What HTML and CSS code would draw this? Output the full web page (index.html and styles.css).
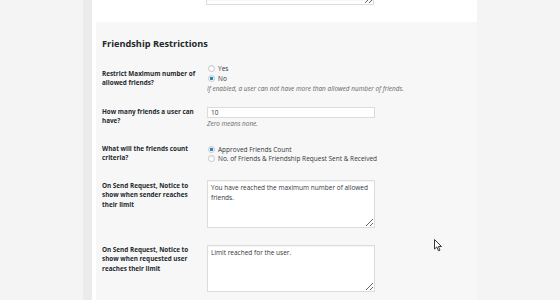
FILE: index.html
```html
<!DOCTYPE html>
<html>
<head>
<meta charset="utf-8">
<link rel="stylesheet" href="styles.css">
</head>
<body>
<div class="page">
  <div class="gutter"></div>
  <div class="strip"></div>
  <div class="main">
    <div class="top">
      <textarea class="area area-top" readonly></textarea>
    </div>
    <div class="section">
      <h2 class="title">Friendship Restrictions</h2>
      <div class="row row-1">
        <div class="label">Restrict Maximum number of allowed friends?</div>
        <div class="field">
          <label class="opt"><input type="radio" name="r1" class="radio"> Yes</label>
          <label class="opt"><input type="radio" name="r1" class="radio" checked> No</label>
          <p class="desc">If enabled, a user can not have more than allowed number of friends.</p>
        </div>
      </div>
      <div class="row row-2">
        <div class="label">How many friends a user can have?</div>
        <div class="field">
          <input type="text" class="text" value="10" readonly>
          <p class="desc desc-2">Zero means none.</p>
        </div>
      </div>
      <div class="row row-3">
        <div class="label">What will the friends count criteria?</div>
        <div class="field">
          <label class="opt opt-tight"><input type="radio" name="r2" class="radio" checked> Approved Friends Count</label>
          <label class="opt opt-tight"><input type="radio" name="r2" class="radio"> No. of Friends &amp; Friendship Request Sent &amp; Received</label>
        </div>
      </div>
      <div class="row row-4">
        <div class="label">On Send Request, Notice to show when sender reaches their limit</div>
        <div class="field">
          <textarea class="area area-4" readonly>You have reached the maximum number of allowed friends.</textarea>
        </div>
      </div>
      <div class="row row-5">
        <div class="label">On Send Request, Notice to show when requested user reaches their limit</div>
        <div class="field">
          <textarea class="area area-5" readonly>Limit reached for the user.</textarea>
        </div>
      </div>
    </div>
  </div>
</div>
<svg class="cursor" width="9" height="13" viewBox="0 0 9 13"><path d="M0.5 0.5 L0.5 10 L2.8 8 L4.5 11.8 L6 11.1 L4.4 7.5 L7.5 7.5 Z" fill="#fff" stroke="#222" stroke-width="0.9" stroke-linejoin="round"/></svg>
</body>
</html>
```

FILE: styles.css
```css
html, body {
  margin: 0;
  padding: 0;
  background: #f4f4f4;
  font-family: "Open Sans", "Noto Sans", sans-serif;
  color: #23282d;
}
.page {
  display: flex;
  height: 300px;
  overflow: hidden;
}
.gutter {
  width: 83px;
  flex: none;
}
.strip {
  width: 9px;
  flex: none;
  background: #ebebeb;
}
.main {
  width: 385px;
  flex: none;
  background: #fff;
  padding-left: 4px;
  box-sizing: border-box;
  display: flex;
  flex-direction: column;
}
.top {
  height: 22px;
  display: flex;
  flex-direction: column;
  justify-content: flex-end;
  overflow: hidden;
  padding-left: 110px;
}
.area {
  display: block;
  box-sizing: border-box;
  width: 168px;
  margin: 0;
  padding: 2px 3px;
  border: 1px solid #dcdcdc;
  border-radius: 0;
  background: #fff;
  color: #32373c;
  font-family: "Open Sans", "Noto Sans", sans-serif;
  font-size: 6.5px;
  line-height: 9.5px;
  box-shadow: inset 0 1px 1px rgba(0,0,0,0.04);
  outline: none;
}
.area-top {
  height: 40px;
  margin-bottom: 17px;
}
.section {
  flex: 1;
  background: #f7f7f7;
  padding-left: 6px;
}
.title {
  margin: 16px 0 10px;
  font-size: 9.2px;
  line-height: 12px;
  font-weight: 700;
}
.row {
  display: grid;
  grid-template-columns: 105px 1fr;
}
.label {
  padding-top: 9.5px;
  padding-right: 8px;
  font-size: 6.35px;
  line-height: 9.3px;
  font-weight: 700;
}
.field {
  font-size: 6.5px;
  color: #32373c;
}
.opt {
  display: flex;
  align-items: center;
  height: 10px;
  gap: 3px;
  padding-left: 1px;
}
.opt-tight {
  height: 9.5px;
}
.radio {
  appearance: none;
  -webkit-appearance: none;
  width: 7px;
  height: 7px;
  margin: 0;
  border: 1px solid #c3c7cb;
  border-radius: 50%;
  background: #fff;
  box-shadow: inset 0 1px 1px rgba(0,0,0,0.08);
  flex: none;
}
.radio:checked {
  background: radial-gradient(circle, #1e8cbe 0 1.4px, #fff 1.9px);
}
.desc {
  margin: 0;
  font-style: italic;
  color: #666;
  font-size: 6.45px;
  line-height: 9px;
}
.desc-2 {
  margin-top: 1.5px;
}
.text {
  display: block;
  box-sizing: border-box;
  width: 168px;
  height: 11px;
  margin: 0;
  padding: 0 3px;
  border: 1px solid #dcdcdc;
  background: #fff;
  font-family: "Open Sans", "Noto Sans", sans-serif;
  font-size: 6.5px;
  color: #32373c;
  outline: none;
}
.row-1 .field { padding: 4px 0 4.5px; }
.row-2 .field { padding: 9.5px 0 6.5px; }
.row-3 .field { padding: 10px 0 8px; }
.row-4 .field { padding: 8.5px 0 7.5px; }
.row-5 .field { padding: 9.5px 0 8px; }
.area-4 { height: 48px; }
.area-5 { height: 47px; }
.cursor {
  position: absolute;
  left: 434px;
  top: 239px;
}
```
